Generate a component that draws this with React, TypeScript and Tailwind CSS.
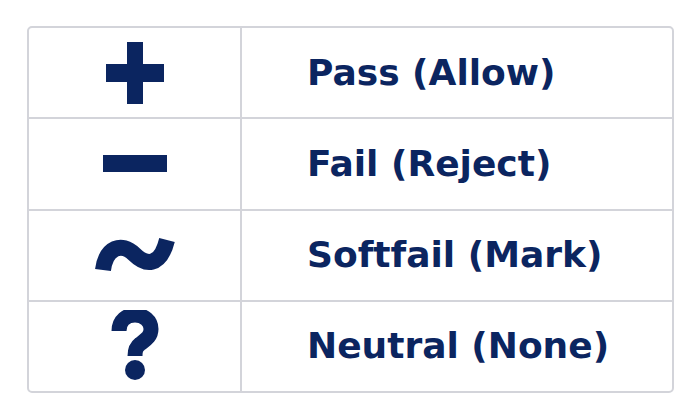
import React from "react";

const rows = [
  { key: "pass", label: "Pass (Allow)" },
  { key: "fail", label: "Fail (Reject)" },
  { key: "soft", label: "Softfail (Mark)" },
  { key: "neutral", label: "Neutral (None)" },
];

function Symbol({ kind }: { kind: string }) {
  if (kind === "pass") {
    return (
      <svg width="58" height="62" viewBox="0 0 58 62">
        <rect x="21" y="0" width="16" height="62" fill="#0b2560" />
        <rect x="0" y="22" width="58" height="18" fill="#0b2560" />
      </svg>
    );
  }
  if (kind === "fail") {
    return (
      <svg width="64" height="17" viewBox="0 0 64 17">
        <rect x="0" y="0" width="64" height="17" fill="#0b2560" />
      </svg>
    );
  }
  if (kind === "soft") {
    return (
      <svg width="82" height="36" viewBox="0 0 82 36">
        <path
          d="M9 33 C12 10 28 5 40 17 C51 28 66 31 73 3"
          fill="none"
          stroke="#0b2560"
          strokeWidth="16"
        />
      </svg>
    );
  }
  return (
    <svg width="50" height="72" viewBox="0 0 50 72">
      <path
        d="M9 21 C9 10 17 5 25 5 C34 5 41 11 41 19 C41 27 35 30 30 34 C26 37 25 40 25 46"
        fill="none"
        stroke="#0b2560"
        strokeWidth="15"
      />
      <circle cx="25" cy="60" r="10" fill="#0b2560" />
    </svg>
  );
}

export default function App() {
  return (
    <div className="w-[700px] h-[420px] bg-white pt-[26px] pl-[27px]">
      <div className="w-[647px] h-[367px] border-2 border-[#d3d4da] rounded-[5px] overflow-hidden flex flex-col">
        {rows.map((row, index) => (
          <div
            key={row.key}
            className={`flex flex-1 ${index > 0 ? "border-t-2 border-[#d3d4da]" : ""}`}
          >
            <div className="w-[213px] shrink-0 border-r-2 border-[#d3d4da] flex items-center justify-center">
              <Symbol kind={row.key} />
            </div>
            <div className="flex-1 flex items-center pl-[65px]">
              <span className="font-['DejaVu_Sans',sans-serif] font-bold text-[36px] text-[#0b2560]">
                {row.label}
              </span>
            </div>
          </div>
        ))}
      </div>
    </div>
  );
}
